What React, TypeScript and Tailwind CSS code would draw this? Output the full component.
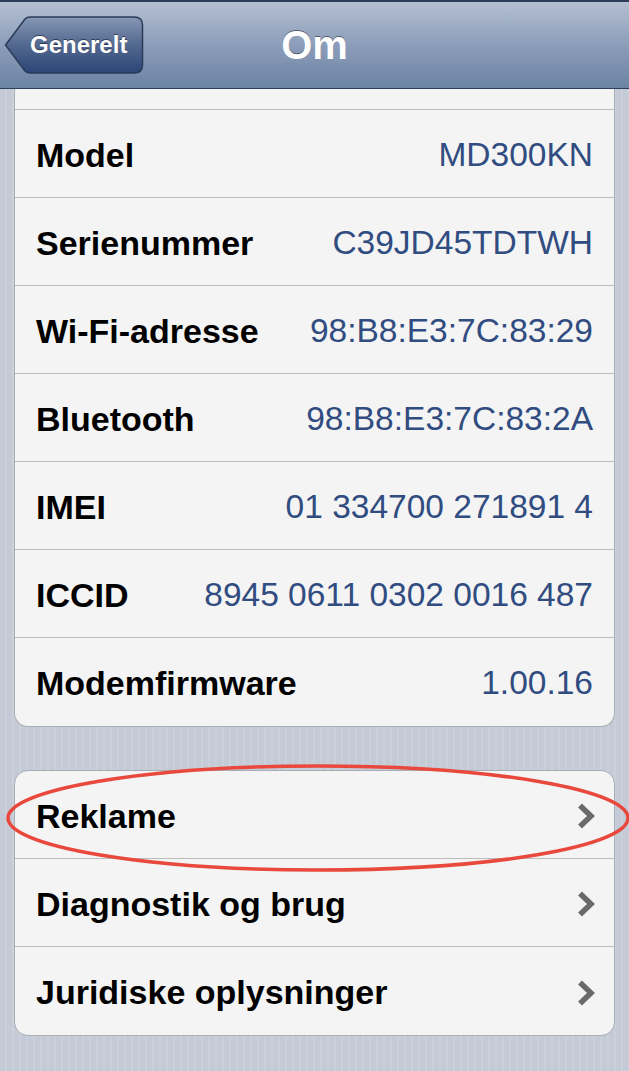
import React from "react";

const font = { fontFamily: '"Liberation Sans", Arial, Helvetica, sans-serif' };

// rækker i første gruppe
const infoRows = [
  { label: "Model", value: "MD300KN" },
  { label: "Serienummer", value: "C39JD45TDTWH" },
  { label: "Wi-Fi-adresse", value: "98:B8:E3:7C:83:29" },
  { label: "Bluetooth", value: "98:B8:E3:7C:83:2A" },
  { label: "IMEI", value: "01 334700 271891 4" },
  { label: "ICCID", value: "8945 0611 0302 0016 487" },
  { label: "Modemfirmware", value: "1.00.16" },
];

const linkRows = ["Reklame", "Diagnostik og brug", "Juridiske oplysninger"];

function Chevron() {
  return (
    <svg width="18" height="26" viewBox="0 0 18 26" className="shrink-0">
      <path d="M3 2.5 L14 13 L3 23.5" fill="none" stroke="#6a6a6a" strokeWidth="5.5" strokeLinejoin="miter" />
    </svg>
  );
}

function BackButton() {
  return (
    <div className="relative h-[58px] w-[140px]">
      <svg className="absolute inset-0" width="140" height="58" viewBox="0 0 140 58">
        <defs>
          <linearGradient id="bb" x1="0" y1="0" x2="0" y2="1">
            <stop offset="0" stopColor="#8597b4" />
            <stop offset="0.5" stopColor="#53688f" />
            <stop offset="1" stopColor="#2b4576" />
          </linearGradient>
        </defs>
        <path
          d="M1.5 29 L21 3 Q23 1 26 1 L130 1 Q138.5 1 138.5 9 L138.5 49 Q138.5 57 130 57 L26 57 Q23 57 21 55 Z"
          fill="url(#bb)"
          stroke="#2a3a58"
          strokeWidth="1.5"
        />
      </svg>
      <div className="relative flex h-full items-center pl-[26px] pr-[14px]">
        <span
          className="text-[24px] font-bold text-white [text-shadow:0_-1px_0_rgba(0,0,0,0.5)]"
          style={font}
        >
          Generelt
        </span>
      </div>
    </div>
  );
}

export default function App() {
  return (
    <div
      className="relative min-h-[1071px] w-[629px] overflow-hidden bg-[repeating-linear-gradient(90deg,#c4cbd6_0px,#c4cbd6_5px,#cad1db_5px,#cad1db_7px)]"
      style={font}
    >
      {/* Navigationslinje */}
      <div className="relative flex h-[89px] items-center border-t-2 border-b border-t-[#2c3d5b] border-b-[#2e3f5e] bg-[linear-gradient(180deg,#b4c0d1_0%,#8c9dba_50%,#6c83a3_100%)] px-[4px]">
        <BackButton />
        <div className="absolute inset-0 flex items-center justify-center">
          <span className="text-[40px] font-bold text-white [text-shadow:0_-1px_0_rgba(0,0,0,0.45)]">Om</span>
        </div>
      </div>

      {/* Første gruppe */}
      <div className="mx-[14px] overflow-hidden rounded-b-[14px] border-x border-b border-[#a9adb5] bg-[#f4f4f4]">
        <div className="h-[21px] border-b border-[#bcbcbc]" />
        {infoRows.map((row, i) => (
          <div
            key={row.label}
            className={`flex h-[88px] items-center justify-between px-[21px] pt-[3px] ${
              i < infoRows.length - 1 ? "border-b border-[#bcbcbc]" : ""
            }`}
          >
            <span className="text-[34px] font-bold text-black">{row.label}</span>
            <span className="text-[33.5px] text-[#314c80]">{row.value}</span>
          </div>
        ))}
      </div>

      {/* Anden gruppe */}
      <div className="mx-[14px] mt-[43px] overflow-hidden rounded-[14px] border border-[#a9adb5] bg-[#f4f4f4]">
        {linkRows.map((label, i) => (
          <div
            key={label}
            className={`flex h-[88px] items-center justify-between pl-[21px] pr-[19px] pt-[3px] ${
              i < linkRows.length - 1 ? "border-b border-[#bcbcbc]" : ""
            }`}
          >
            <span className="text-[34px] font-bold text-black">{label}</span>
            <Chevron />
          </div>
        ))}
      </div>

      {/* Rød markering */}
      <svg className="pointer-events-none absolute left-0 top-0" width="629" height="1071">
        <ellipse cx="318" cy="818" rx="310" ry="52" fill="none" stroke="#e9483d" strokeWidth="3.5" />
      </svg>
    </div>
  );
}
